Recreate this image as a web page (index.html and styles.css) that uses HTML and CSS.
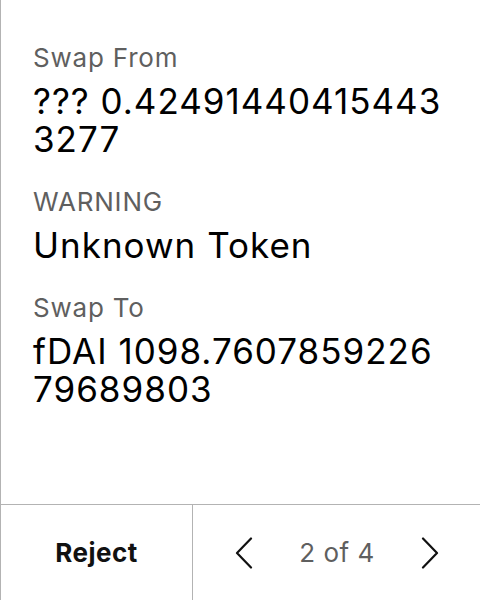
FILE: index.html
```html
<!DOCTYPE html>
<html>
<head>
<meta charset="utf-8">
<link rel="stylesheet" href="styles.css">
</head>
<body>
<div class="panel">
  <div class="content">
    <div class="field">
      <div class="label">Swap From</div>
      <div class="value">??? 0.424914404154433277</div>
    </div>
    <div class="field">
      <div class="label">WARNING</div>
      <div class="value">Unknown Token</div>
    </div>
    <div class="field">
      <div class="label">Swap To</div>
      <div class="value">fDAI 1098.760785922679689803</div>
    </div>
  </div>
  <div class="footer">
    <div class="reject">Reject</div>
    <div class="pager">
      <svg class="chev" width="18" height="32" viewBox="0 0 18 32"><path d="M16 1.5 L2 16 L16 30.5" fill="none" stroke="#111" stroke-width="2.2" stroke-linecap="round" stroke-linejoin="round"/></svg>
      <span class="count">2 of 4</span>
      <svg class="chev" width="18" height="32" viewBox="0 0 18 32"><path d="M2 1.5 L16 16 L2 30.5" fill="none" stroke="#111" stroke-width="2.2" stroke-linecap="round" stroke-linejoin="round"/></svg>
    </div>
  </div>
</div>
</body>
</html>
```
FILE: styles.css
```css
html, body { margin: 0; padding: 0; background: #fff; }
body { font-family: Inter, "Noto Sans", sans-serif; color: #000; }
.panel {
  width: 480px; height: 600px; box-sizing: border-box;
  border-left: 1px solid #b3b3b3;
  display: flex; flex-direction: column;
}
.content {
  flex: 1; padding: 42px 32px 0 32px;
  display: flex; flex-direction: column; gap: 28px;
}
.field { display: flex; flex-direction: column; gap: 8px; }
.label { font-size: 26px; line-height: 32px; letter-spacing: 0.8px; color: #5f5f5f; }
.value {
  font-size: 35px; line-height: 38px; letter-spacing: 1px; color: #000;
  word-break: break-all;
}
.footer {
  height: 96px; box-sizing: border-box; border-top: 1px solid #b3b3b3;
  display: grid; grid-template-columns: 192px 1fr;
}
.reject {
  border-right: 1px solid #b3b3b3;
  display: flex; align-items: center; justify-content: center;
  font-size: 26px; font-weight: 700; color: #111; letter-spacing: 0.5px;
}
.pager {
  display: flex; align-items: center; justify-content: space-between;
  padding: 0 41px 0 42px;
}
.count { font-size: 26px; color: #5f5f5f; letter-spacing: 0.5px; }
```
